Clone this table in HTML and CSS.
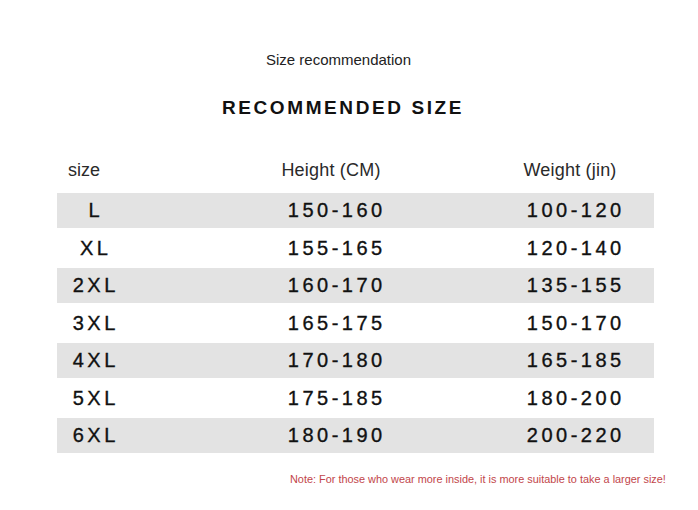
FILE: index.html
```html
<!DOCTYPE html>
<html>
<head>
<meta charset="utf-8">
<link rel="stylesheet" href="styles.css">
</head>
<body>
<div class="page">
  <div class="subtitle">Size recommendation</div>
  <div class="title">RECOMMENDED SIZE</div>
  <div class="table">
    <div class="head">
      <div class="c1">size</div>
      <div class="c2">Height (CM)</div>
      <div class="c3">Weight (jin)</div>
    </div>
    <div class="row gray"><div class="c1">L</div><div class="c2">150-160</div><div class="c3">100-120</div></div>
    <div class="row"><div class="c1">XL</div><div class="c2">155-165</div><div class="c3">120-140</div></div>
    <div class="row gray"><div class="c1">2XL</div><div class="c2">160-170</div><div class="c3">135-155</div></div>
    <div class="row"><div class="c1">3XL</div><div class="c2">165-175</div><div class="c3">150-170</div></div>
    <div class="row gray"><div class="c1">4XL</div><div class="c2">170-180</div><div class="c3">165-185</div></div>
    <div class="row"><div class="c1">5XL</div><div class="c2">175-185</div><div class="c3">180-200</div></div>
    <div class="row gray"><div class="c1">6XL</div><div class="c2">180-190</div><div class="c3">200-220</div></div>
  </div>
  <div class="note">Note: For those who wear more inside, it is more suitable to take a larger size!</div>
</div>
</body>
</html>
```
FILE: styles.css
```css
* { box-sizing: border-box; }
html, body { margin: 0; padding: 0; background: #fff; }
body { font-family: "Liberation Sans", Arial, sans-serif; color: #111; }
.page { width: 698px; height: 510px; padding-top: 52px; }
.subtitle {
  width: 677px;
  text-align: center;
  font-size: 15px;
  line-height: 16px;
  color: #222;
}
.title {
  margin-top: 29px;
  width: 683px;
  padding-left: 3px;
  text-align: center;
  font-size: 19px;
  line-height: 22px;
  font-weight: bold;
  letter-spacing: 2.6px;
  color: #111;
}
.table { margin-top: 33px; margin-left: 57px; width: 597px; }
.head, .row { display: flex; align-items: center; }
.head { height: 36px; margin-bottom: 5px; font-size: 18px; color: #2a2a2a; }
.head .c1 { text-align: left; padding-left: 11px; }
.head .c2, .head .c3 { padding-right: 8px; letter-spacing: 0.2px; }
.c1 { width: 74px; text-align: center; }
.c2 { width: 270px; margin-left: 69px; text-align: center; }
.c3 { width: 160px; margin-left: 24px; text-align: center; }
.row { height: 40px; font-size: 20px; letter-spacing: 3.5px; color: #111; -webkit-text-stroke: 0.35px #111; }
.row > div { padding-left: 3.5px; }
.row.gray { height: 35px; background: #e3e3e3; }
.note {
  margin-top: 19px;
  margin-left: 290px;
  font-size: 10.9px;
  line-height: 14px;
  color: #c2464a;
  white-space: nowrap;
}
```
